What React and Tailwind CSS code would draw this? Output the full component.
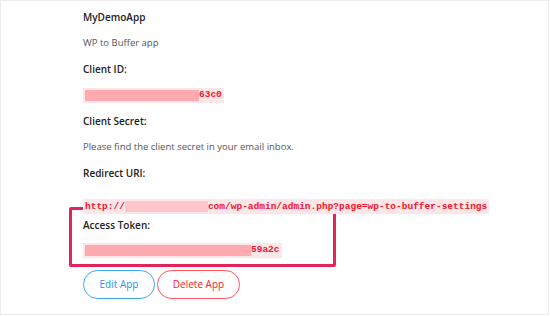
export default function App() {
  return (
    <div className="w-[550px] h-[316px] bg-white" style={{ fontFamily: '"Open Sans", sans-serif' }}>
      <div className="w-[549px] h-[315px] border border-[#ececec] pl-[82px] pt-[3px]">
        <div className="h-[26px] flex items-center text-[10px] font-semibold text-[#222]">MyDemoApp</div>
        <div className="h-[26px] flex items-center text-[9.5px] text-[#555]">WP to Buffer app</div>
        <div className="h-[26px] flex items-center text-[10px] font-semibold text-[#222]">Client ID:</div>
        <div className="h-[26px] flex items-center">
          <Code>
            <Blur w="w-[114px]" />
            <span>63c0</span>
          </Code>
        </div>
        <div className="h-[26px] flex items-center text-[10px] font-semibold text-[#222]">Client Secret:</div>
        <div className="h-[26px] flex items-center text-[9.5px] text-[#555]">
          Please find the client secret in your email inbox.
        </div>
        <div className="h-[26px] flex items-center text-[10px] font-semibold text-[#222]">Redirect URI:</div>
        <div className="h-[21px] pt-[5px]">
          <Code>
            <span>http://</span>
            <Blur w="w-[83px]" light />
            <span>com/wp-admin/admin.php?page=wp-to-buffer-settings</span>
          </Code>
        </div>
        <div className="w-[267px] -ml-[14px] border-[3px] border-[#e2245a] rounded-[2px] pl-[11px] pt-[2px] pb-[2px]">
          <div className="h-[26px] flex items-center text-[10px] font-semibold text-[#222]">Access Token:</div>
          <div className="h-[24px] flex items-center">
            <Code>
              <Blur w="w-[166px]" />
              <span>59a2c</span>
            </Code>
          </div>
        </div>
        <div className="flex gap-[2px] mt-[3px]">
          <button className="w-[72px] h-[29px] rounded-full border border-[#3aa8f0] text-[#1f95e6] text-[10px] font-medium">
            Edit App
          </button>
          <button className="w-[83px] h-[29px] rounded-full border border-[#ff5560] text-[#f5202f] text-[10px] font-medium">
            Delete App
          </button>
        </div>
      </div>
    </div>
  );
}

function Code({ children }) {
  return (
    <div
      className="inline-flex items-center h-[15px] px-[2px] bg-[#fde6e8] text-[#f0142a] text-[9.5px] font-bold leading-none"
      style={{ fontFamily: '"Liberation Mono", monospace' }}
    >
      {children}
    </div>
  );
}

function Blur({ w, light }) {
  return <span className={`${w} h-[11px] ${light ? "bg-[#ffc6cc]" : "bg-[#ffa9b0]"}`} />;
}
